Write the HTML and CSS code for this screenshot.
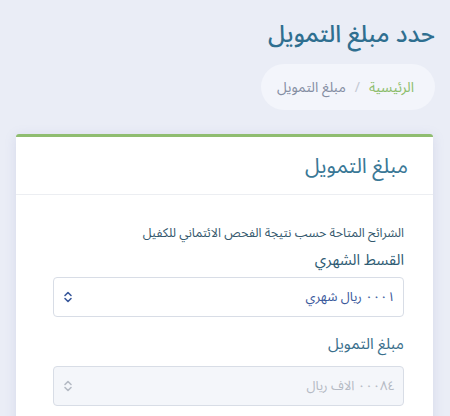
FILE: index.html
```html
<!DOCTYPE html>
<html lang="ar" dir="rtl">
<head>
<meta charset="utf-8">
<link rel="stylesheet" href="styles.css">
</head>
<body>
<div class="page">
  <h1 class="page-title">حدد مبلغ التمويل</h1>
  <nav class="crumbs">
    <a class="crumb-home">الرئيسية</a>
    <span class="crumb-sep">/</span>
    <span class="crumb-current">مبلغ التمويل</span>
  </nav>
  <section class="card">
    <header class="card-head">مبلغ التمويل</header>
    <div class="card-body">
      <p class="hint">الشرائح المتاحة حسب نتيجة الفحص الائتماني للكفيل</p>
      <label class="field-label">القسط الشهري</label>
      <div class="select">
        <span class="select-text"><bdo dir="rtl">١٠٠٠</bdo> ريال شهري</span>
        <svg class="chev" viewBox="0 0 10 14" width="10" height="14"><path d="M2 5.5 L5 2.5 L8 5.5 M2 8.5 L5 11.5 L8 8.5" fill="none" stroke="currentColor" stroke-width="1.6" stroke-linecap="round" stroke-linejoin="round"/></svg>
      </div>
      <label class="field-label second">مبلغ التمويل</label>
      <div class="select disabled">
        <span class="select-text"><bdo dir="rtl">٤٨٠٠٠</bdo> الاف ريال</span>
        <svg class="chev" viewBox="0 0 10 14" width="10" height="14"><path d="M2 5.5 L5 2.5 L8 5.5 M2 8.5 L5 11.5 L8 8.5" fill="none" stroke="currentColor" stroke-width="1.6" stroke-linecap="round" stroke-linejoin="round"/></svg>
      </div>
    </div>
  </section>
</div>
</body>
</html>
```
FILE: styles.css
```css
* { box-sizing: border-box; }
html, body { margin: 0; padding: 0; }
body {
  background: #eaedf6;
  font-family: "Noto Sans Arabic", "DejaVu Sans", "Noto Sans", sans-serif;
  width: 450px;
  height: 416px;
  overflow: hidden;
}
.page {
  padding: 18px 15px 0 16px;
  display: flex;
  flex-direction: column;
  align-items: flex-start;
}
.page-title {
  margin: 0;
  font-size: 24px;
  font-weight: 500;
  color: #2f6f90;
  line-height: 34px;
}
.crumbs {
  margin-top: 12px;
  background: #f3f5fb;
  border-radius: 23px;
  height: 46px;
  width: 174px;
  display: flex;
  align-items: center;
  gap: 9px;
  padding: 0 21px 0 0;
  font-size: 14px;
}
.crumb-home { color: #8dbd6c; }
.crumb-sep { color: #c4c9d4; }
.crumb-current { color: #858ea3; }
.card {
  margin-top: 24px;
  align-self: stretch;
  margin-right: 2px;
  background: #fff;
  border-top: 3px solid #8fbd70;
  border-radius: 3px;
  box-shadow: 0 2px 12px rgba(120, 130, 190, 0.18);
}
.card-head {
  height: 58px;
  display: flex;
  align-items: center;
  padding-right: 25px;
  font-size: 21px;
  color: #3a7896;
  border-bottom: 1px solid #eceef2;
}
.card-body {
  padding: 27px 29px 20px 37px;
}
.hint {
  margin: 0 0 3px;
  font-size: 12.5px;
  color: #34586d;
  line-height: 22px;
}
.field-label {
  display: block;
  margin: 0;
  font-size: 15px;
  color: #2f5c74;
  line-height: 26px;
}
.field-label.second {
  margin-top: 14px;
  font-size: 15.5px;
  color: #3a6f8c;
}
.select {
  margin-top: 4px;
  height: 40px;
  border: 1px solid #d8dde6;
  border-radius: 4px;
  display: flex;
  align-items: center;
  justify-content: space-between;
  padding: 0 8px 0 9px;
  background: #fff;
}
.select-text {
  font-size: 13px;
  color: #3b5a9c;
}
.chev { color: #3b5a9c; }
.select.disabled {
  margin-top: 9px;
  background: #f4f6fa;
}
.select.disabled .select-text, .select.disabled .chev { color: #b5bac4; }
```
